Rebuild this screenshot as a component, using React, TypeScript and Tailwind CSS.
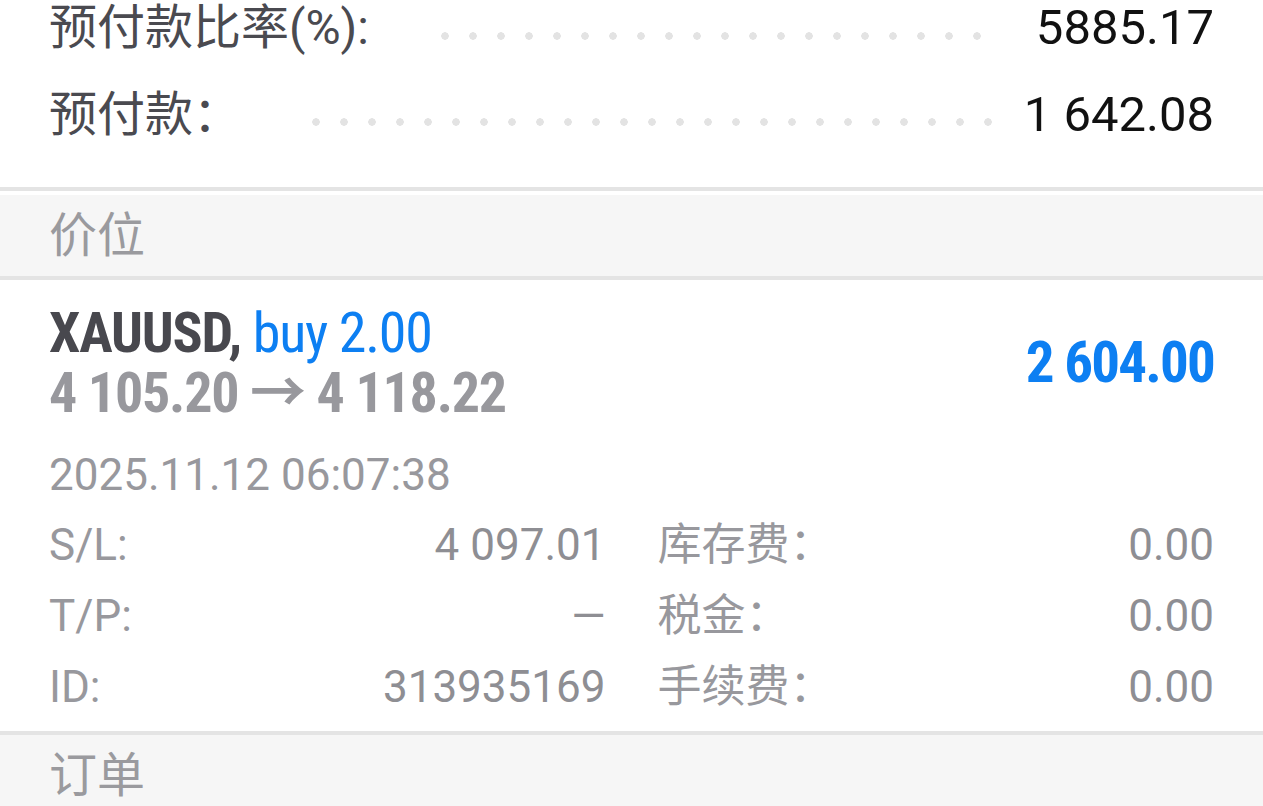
const font = "font-['Roboto','Noto_Sans_CJK_SC',sans-serif]";

function Dots({ className }: { className: string }) {
  return (
    <div
      className={`mt-[15px] h-[8px] bg-[radial-gradient(circle,#e3e3e3_3.5px,transparent_4px)] bg-[length:28px_8px] bg-repeat-x ${className}`}
    />
  );
}

function SummaryRow({
  label,
  value,
  labelBox,
  dots,
  row,
}: {
  label: string;
  value: string;
  labelBox: string;
  dots: string;
  row: string;
}) {
  return (
    <div className={`flex items-center leading-[56px] ${row}`}>
      <div className={`shrink-0 text-[48px] text-[#4a4a50] ${labelBox}`}>{label}</div>
      <Dots className={dots} />
      <div className="ml-auto text-[49px] text-[#111]">{value}</div>
    </div>
  );
}

function SectionHeader({ title }: { title: string }) {
  return (
    <div className="flex h-[81px] items-center bg-[#f6f6f6] px-[49px] text-[48px] text-[#9a9a9e]">
      {title}
    </div>
  );
}

function DetailCell({ label, value }: { label: string; value: string }) {
  return (
    <div className="flex h-[71px] items-center justify-between">
      <span>{label}</span>
      <span className="text-[#8e8e93]">{value}</span>
    </div>
  );
}

export default function App() {
  return (
    <div className={`h-[806px] w-[1263px] overflow-hidden bg-white ${font}`}>
      <div className="px-[49px] pb-[29px]">
        <SummaryRow
          label="预付款比率(%):"
          value="5885.17"
          labelBox="w-[382px]"
          dots="w-[560px]"
          row="h-[56px]"
        />
        <SummaryRow
          label="预付款："
          value="1 642.08"
          labelBox="w-[253px]"
          dots="w-[700px]"
          row="mt-[15px] h-[87px]"
        />
      </div>
      <div className="h-[4px] bg-[#e4e4e4]" />
      <div className="h-[4px] bg-white" />
      <SectionHeader title="价位" />
      <div className="h-[4px] bg-[#e4e4e4]" />

      <div className="px-[49px] pt-[23px]">
        <div className="flex items-center justify-between [font-stretch:75%]">
          <div className="tracking-[-1.2px]">
            <div className="text-[56px] leading-[60px]">
              <span className="font-bold text-[#48484e]">XAUUSD,</span>{" "}
              <span className="text-[#0d7ff2]">buy 2.00</span>
            </div>
            <div className="text-[56px] font-bold leading-[60px] text-[#98989d]">
              4 105.20 → 4 118.22
            </div>
          </div>
          <div className="text-[57px] font-bold tracking-[-1.8px] text-[#0d7ff2]">2 604.00</div>
        </div>
        <div className="mt-[22px] text-[44px] leading-[60px] text-[#98989d]">
          2025.11.12 06:07:38
        </div>
        <div className="mt-[4px] grid grid-cols-2 gap-x-[52px] pb-[9px] text-[44px] text-[#98989d]">
          <DetailCell label="S/L:" value="4 097.01" />
          <DetailCell label="库存费：" value="0.00" />
          <DetailCell label="T/P:" value="—" />
          <DetailCell label="税金：" value="0.00" />
          <DetailCell label="ID:" value="313935169" />
          <DetailCell label="手续费：" value="0.00" />
        </div>
      </div>
      <div className="h-[4px] bg-[#e4e4e4]" />
      <SectionHeader title="订单" />
    </div>
  );
}
